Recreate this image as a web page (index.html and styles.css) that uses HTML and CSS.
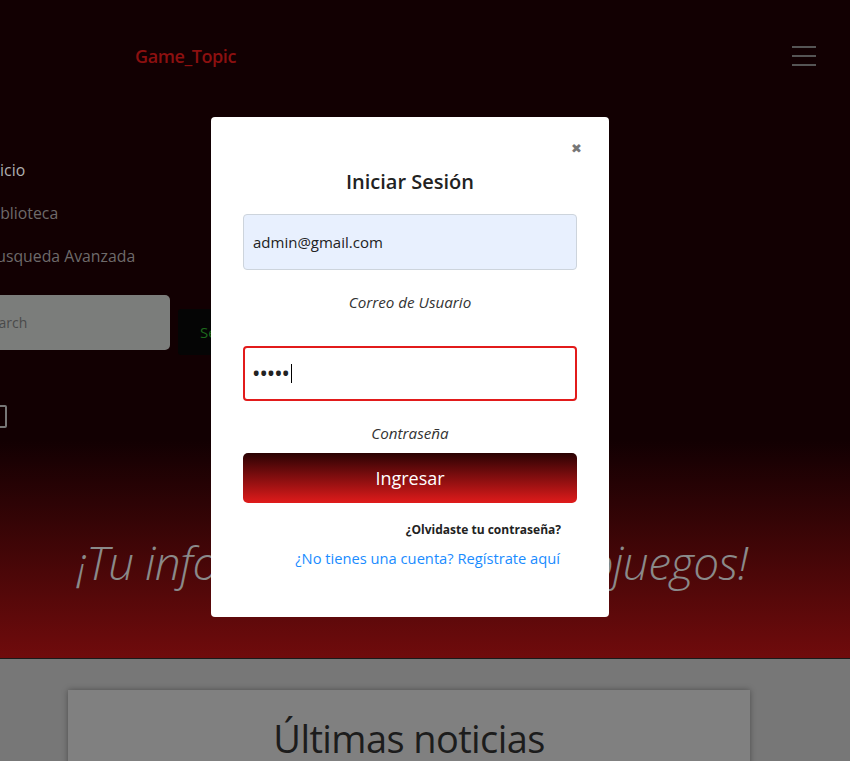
FILE: index.html
```html
<!DOCTYPE html>
<html lang="es">
<head>
<meta charset="utf-8">
<title>Game_Topic</title>
<link rel="stylesheet" href="styles.css">
</head>
<body>
<div class="top">
  <header class="navbar">
    <a class="brand" href="#">Game_Topic</a>
    <button class="toggler" type="button" aria-label="Menú">
      <span></span><span></span><span></span>
    </button>
  </header>
  <ul class="nav-list">
    <li class="nav-item active">Inicio</li>
    <li class="nav-item">Biblioteca</li>
    <li class="nav-item">Busqueda Avanzada</li>
  </ul>
  <form class="search-row">
    <div class="search-input">Search</div>
    <div class="search-btn">Search</div>
  </form>
  <div class="check-box"></div>
  <h2 class="hero-text">¡Tu información sobre videojuegos!</h2>
</div>
<section class="news">
  <div class="news-card">
    <h1 class="news-title">Últimas noticias</h1>
  </div>
</section>

<div class="modal">
  <div class="modal-head">
    <span class="close">&#x2716;</span>
  </div>
  <h3 class="modal-title">Iniciar Sesión</h3>
  <div class="field field-email">admin@gmail.com</div>
  <p class="label">Correo de Usuario</p>
  <div class="field field-pass"><span class="dots">•••••</span><span class="caret"></span></div>
  <p class="label label-pass">Contraseña</p>
  <div class="btn-login">Ingresar</div>
  <p class="forgot">¿Olvidaste tu contraseña?</p>
  <p class="register">¿No tienes una cuenta? Regístrate aquí</p>
</div>
</body>
</html>
```

FILE: styles.css
```css
* { box-sizing: border-box; }
html, body { margin: 0; padding: 0; }
body {
  font-family: "Open Sans", "Noto Sans", sans-serif;
  width: 850px;
  height: 761px;
  overflow: hidden;
  background: #777;
  position: relative;
}
.top {
  height: 659px;
  background: linear-gradient(180deg, #120002 0px, #120002 440px, #700b0c 658px);
  border-bottom: 1px solid #1a1a1a;
  overflow: hidden;
}
.navbar {
  height: 112px;
  display: flex;
  align-items: center;
  justify-content: space-between;
  padding: 0 34px 0 135px;
}
.brand {
  color: #8c1010;
  text-decoration: none;
  font-size: 18px;
  font-weight: 600;
  letter-spacing: -0.4px;
}
.toggler {
  background: none;
  border: none;
  padding: 0;
  width: 24px;
  height: 20px;
  display: flex;
  flex-direction: column;
  justify-content: space-between;
}
.toggler span {
  display: block;
  height: 2px;
  width: 24px;
  background: #555;
}
.nav-list {
  list-style: none;
  margin: 37px 0 0 -14px;
  padding: 0;
}
.nav-item {
  height: 43px;
  line-height: 43px;
  font-size: 15.8px;
  color: #6e6a6a;
}
.nav-item.active { color: #b0b0b0; }
.search-row {
  display: flex;
  align-items: flex-start;
  gap: 8px;
  margin: 17px 0 0 -29px;
}
.search-input {
  width: 199px;
  height: 55px;
  background: #7b7d7b;
  border-radius: 5px;
  padding-left: 12px;
  line-height: 55px;
  font-size: 14px;
  color: #4a4a4a;
}
.search-btn {
  margin-top: 14px;
  width: 100px;
  height: 46px;
  background: #050505;
  border-radius: 3px;
  color: #1d6a1d;
  font-size: 15px;
  line-height: 46px;
  padding-left: 22px;
}
.check-box {
  margin: 50px 0 0 -16px;
  width: 23px;
  height: 23px;
  border: 2px solid #777;
  border-radius: 2px;
}
.hero-text {
  margin: 104px 0 0;
  text-align: center;
  padding-right: 26px;
  font-size: 46px;
  font-weight: 300;
  font-style: italic;
  color: #8a8a8a;
  letter-spacing: -0.6px;
  line-height: 60px;
}
.news {
  padding: 31px 100px 0 68px;
}
.news-card {
  width: 682px;
  height: 120px;
  background: #808080;
  box-shadow: 0 0 6px rgba(0, 0, 0, 0.35);
  padding-top: 22px;
}
.news-title {
  margin: 0;
  text-align: center;
  font-size: 38px;
  font-weight: 400;
  color: #1c1c1c;
  letter-spacing: -0.6px;
}

/* modal, lies over the page */
.modal {
  position: absolute;
  left: 211px;
  top: 117px;
  width: 398px;
  height: 500px;
  background: #fff;
  border-radius: 4px;
  padding: 20px 32px 0;
}
.modal-head {
  display: flex;
  justify-content: flex-end;
  height: 22px;
}
.close {
  color: #777;
  font-size: 13px;
  line-height: 22px;
  margin-right: -5px;
}
.modal-title {
  margin: 9px 0 18px;
  text-align: center;
  font-size: 20px;
  font-weight: 600;
  color: #222;
  line-height: 28px;
}
.field {
  height: 56px;
  border-radius: 4px;
  font-size: 15px;
  color: #222;
  display: flex;
  align-items: center;
  padding-left: 9px;
}
.field-email {
  background: #e8f0fe;
  border: 1px solid #cdd4dc;
}
.field-pass {
  height: 55px;
  border: 2px solid #e21b1b;
  padding-left: 8px;
}
.dots { letter-spacing: 1px; font-size: 17px; font-weight: 700; }
.caret {
  display: inline-block;
  width: 1px;
  height: 19px;
  background: #000;
  margin-left: 1px;
}
.label {
  margin: 22px 0 34px;
  text-align: center;
  font-style: italic;
  font-size: 15.2px;
  color: #333;
  line-height: 20px;
}
.label-pass { margin: 22px 0 10px; }
.btn-login {
  height: 50px;
  border-radius: 5px;
  background: linear-gradient(180deg, #2a0203 0%, #e01b1b 100%);
  color: #fff;
  font-size: 18px;
  text-align: center;
  line-height: 50px;
}
.forgot {
  margin: 18px 16px 0 0;
  text-align: right;
  font-size: 12px;
  font-weight: 700;
  color: #222;
  line-height: 18px;
}
.register {
  margin: 9px 17px 0 0;
  text-align: right;
  font-size: 14.7px;
  color: #1a8cff;
  line-height: 20px;
}
```
